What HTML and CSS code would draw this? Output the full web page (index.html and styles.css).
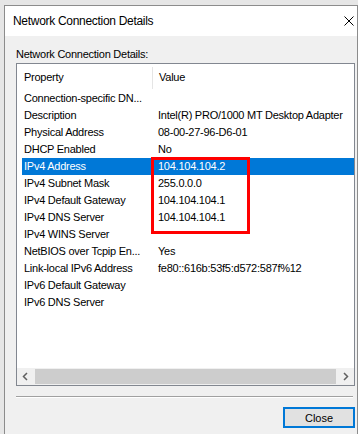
FILE: index.html
```html
<!DOCTYPE html>
<html lang="en">
<head>
    <meta charset="UTF-8">
    <title>Network Connection Details</title>
    <link rel="stylesheet" href="styles.css">
</head>
<body>
    <div class="window">
        <div class="titlebar">
            <span class="title">Network Connection Details</span>
            <svg class="close-x" width="10" height="10" viewBox="0 0 10 10">
                <path d="M0.5 0.5 L9.5 9.5 M9.5 0.5 L0.5 9.5" stroke="#000" stroke-width="1"/>
            </svg>
        </div>
        <div class="dialog">
            <div class="label">Network Connection Details:</div>
            <div class="listview">
                <div class="header">
                    <div class="col-prop">Property</div>
                    <div class="col-sep"></div>
                    <div class="col-val">Value</div>
                </div>
                <div class="rows">
                    <div class="row"><span class="p">Connection-specific DN...</span><span class="v"></span></div>
                    <div class="row"><span class="p">Description</span><span class="v">Intel(R) PRO/1000 MT Desktop Adapter</span></div>
                    <div class="row"><span class="p">Physical Address</span><span class="v">08-00-27-96-D6-01</span></div>
                    <div class="row"><span class="p">DHCP Enabled</span><span class="v">No</span></div>
                    <div class="row selected"><span class="p">IPv4 Address</span><span class="v">104.104.104.2</span></div>
                    <div class="row"><span class="p">IPv4 Subnet Mask</span><span class="v">255.0.0.0</span></div>
                    <div class="row"><span class="p">IPv4 Default Gateway</span><span class="v">104.104.104.1</span></div>
                    <div class="row"><span class="p">IPv4 DNS Server</span><span class="v">104.104.104.1</span></div>
                    <div class="row"><span class="p">IPv4 WINS Server</span><span class="v"></span></div>
                    <div class="row"><span class="p">NetBIOS over Tcpip En...</span><span class="v">Yes</span></div>
                    <div class="row"><span class="p">Link-local IPv6 Address</span><span class="v">fe80::616b:53f5:d572:587f%12</span></div>
                    <div class="row"><span class="p">IPv6 Default Gateway</span><span class="v"></span></div>
                    <div class="row"><span class="p">IPv6 DNS Server</span><span class="v"></span></div>
                    <div class="highlight-box"></div>
                </div>
                <div class="hscroll">
                    <svg class="arrow" width="17" height="17" viewBox="0 0 17 17">
                        <path d="M10 5 L6.5 8.5 L10 12" fill="none" stroke="#606060" stroke-width="1.5"/>
                    </svg>
                    <div class="track"><div class="thumb"></div></div>
                    <svg class="arrow" width="17" height="17" viewBox="0 0 17 17">
                        <path d="M7 5 L10.5 8.5 L7 12" fill="none" stroke="#606060" stroke-width="1.5"/>
                    </svg>
                </div>
            </div>
            <div class="separator"></div>
            <div class="buttons">
                <button class="btn-close">Close</button>
            </div>
        </div>
    </div>
</body>
</html>
```

FILE: styles.css
```css
body {
    margin: 0;
    background: #e6e6e6;
    font-family: 'Liberation Sans', Arial, sans-serif;
    color: #000;
    overflow: hidden;
}
.window {
    margin: 5px 0 0 4px;
    width: 352px;
    height: 429px;
    border: 1px solid #8c8c8c;
    border-bottom: none;
    background: #f0f0f0;
}
.titlebar {
    height: 30px;
    background: #fff;
    display: flex;
    align-items: center;
    justify-content: space-between;
    padding: 0 3px 0 8px;
}
.title {
    font-size: 12px;
    letter-spacing: -0.3px;
}
.close-x {
    margin-right: 0;
}
.dialog {
    padding: 0 0 0 11px;
}
.label {
    height: 27px;
    line-height: 36px;
    font-size: 11px;
    letter-spacing: -0.25px;
}
.listview {
    width: 337px;
    height: 321px;
    border: 1px solid #828790;
    background: #fff;
    display: flex;
    flex-direction: column;
    font-size: 11px;
    letter-spacing: -0.25px;
}
.header {
    height: 26px;
    display: flex;
    align-items: center;
    padding-left: 5px;
}
.col-prop {
    width: 128px;
    padding-left: 2px;
}
.col-sep {
    width: 1px;
    height: 22px;
    margin-top: 2px;
    background: #e5e5e5;
}
.col-val {
    padding-left: 6px;
}
.rows {
    flex: 1;
    padding-left: 5px;
    position: relative;
}
.row {
    height: 17px;
    line-height: 17px;
    display: grid;
    grid-template-columns: 130px 1fr;
    white-space: nowrap;
}
.row .p {
    padding-left: 2px;
}
.row .v {
    padding-left: 6px;
}
.row.selected {
    background: #0078d7;
    color: #fff;
}
.highlight-box {
    position: absolute;
    left: 134px;
    top: 67px;
    width: 93px;
    height: 71px;
    border: 3px solid #ff0000;
}
.hscroll {
    height: 17px;
    display: flex;
    align-items: center;
    background: #f0f0f0;
}
.arrow {
    flex: none;
}
.track {
    flex: 1;
    height: 17px;
    display: flex;
    align-items: center;
    padding: 0 1px;
}
.thumb {
    width: 100%;
    height: 15px;
    background: #cdcdcd;
}
.separator {
    width: 337px;
    margin-top: 10px;
    border-top: 1px solid #a0a0a0;
    border-bottom: 1px solid #fff;
}
.buttons {
    display: flex;
    justify-content: flex-end;
    width: 339px;
    margin-top: 9px;
}
.btn-close {
    width: 72px;
    height: 21px;
    border: 2px solid #0078d7;
    background: #e1e1e1;
    font-family: 'Liberation Sans', Arial, sans-serif;
    font-size: 11px;
    padding: 0;
}
```
